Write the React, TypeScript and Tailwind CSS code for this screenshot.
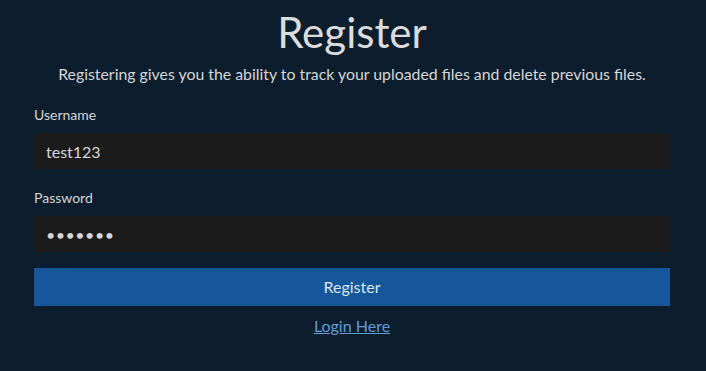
import React from "react";

export default function App() {
  return (
    <div className="min-h-screen w-full bg-[#0c1e2d] font-['Lato',sans-serif] text-[#d6d6d6]">
      <div className="pl-[34px] pr-[36px] pt-[7px]">
        <h1 className="text-center text-[42px] leading-[50px] font-normal text-[#dcdcdc]">Register</h1>
        <p className="mt-[5px] text-center text-[15.85px] leading-[24px]">
          Registering gives you the ability to track your uploaded files and delete previous files.
        </p>
        <form className="mt-[19px] flex flex-col" onSubmit={(e) => e.preventDefault()}>
          <label className="text-[14px] leading-[20px]">Username</label>
          <input
            type="text"
            defaultValue="test123"
            className="mt-[8px] h-[36px] w-full bg-[#1b1b1b] px-[12px] text-[16px] text-[#d6d6d6] outline-none"
          />
          <label className="mt-[19px] text-[14px] leading-[20px]">Password</label>
          <input
            type="password"
            defaultValue="1234567"
            className="mt-[8px] h-[36px] w-full bg-[#1b1b1b] px-[12px] text-[16px] tracking-[0.5px] text-[#d6d6d6] outline-none"
          />
          <button
            type="submit"
            className="mt-[16px] h-[38px] w-full bg-[#15579a] text-[16px] text-[#dbe4ee]"
          >
            Register
          </button>
          <a href="#" className="mt-[8px] self-center text-[16px] leading-[24px] text-[#5d9fd6] underline">
            Login Here
          </a>
        </form>
      </div>
    </div>
  );
}
